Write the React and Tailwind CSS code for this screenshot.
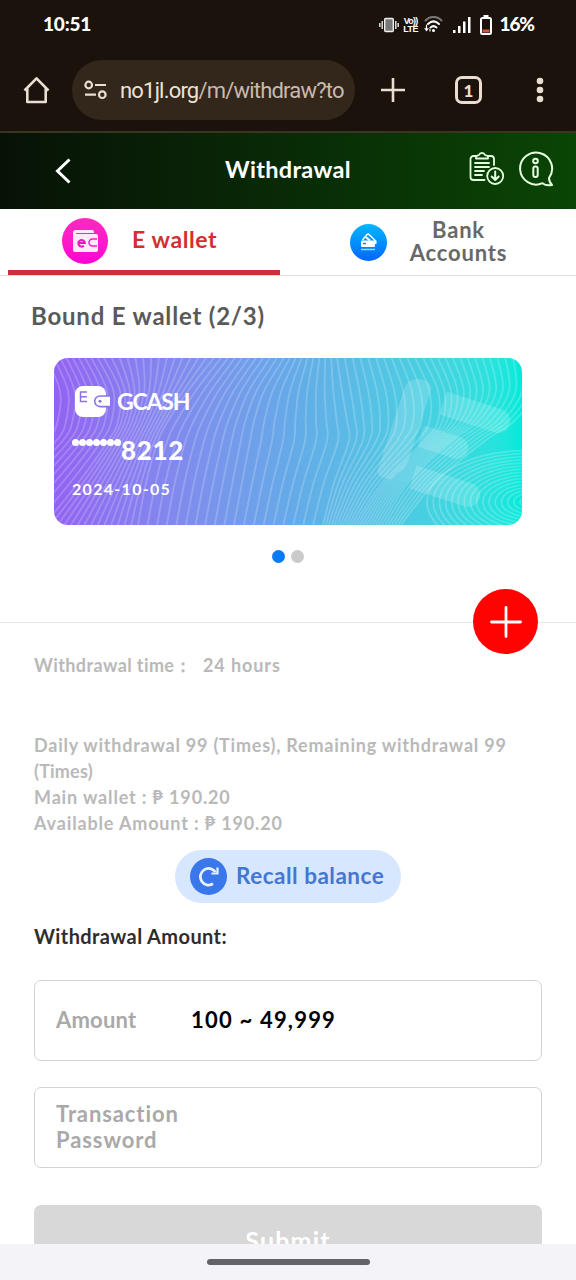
import { clsx } from 'clsx';

// x positions of the card's guide waves at each of WAVE_Y
const WAVE_Y = [0, 33, 63, 83, 125, 167];
const WAVES = [
  [-60, -50, -55, -70, -120, -180],
  [0, 14, 12, 2, -40, -85],
  [50, 66, 64, 54, 24, -10],
  [160, 134, 114, 104, 92, 84],
  [230, 210, 200, 196, 188, 180],
  [283, 288, 293, 295, 280, 269],
  [369, 384, 384, 370, 328, 300],
  [436, 442, 425, 398, 354, 328],
  [490, 488, 466, 436, 385, 350],
];
const WAVE_STEPS = [8, 8, 14, 10, 9, 11, 9, 7];

function wavePath(xs) {
  const p = xs.map((x, i) => [x, WAVE_Y[i]]);
  let d = `M${p[0][0]} ${p[0][1]}`;
  for (let i = 0; i < p.length - 1; i++) {
    const a = p[Math.max(i - 1, 0)];
    const b = p[i];
    const c = p[i + 1];
    const e = p[Math.min(i + 2, p.length - 1)];
    d += `C${b[0] + (c[0] - a[0]) / 6} ${b[1] + (c[1] - a[1]) / 6} ${c[0] - (e[0] - b[0]) / 6} ${c[1] - (e[1] - b[1]) / 6} ${c[0]} ${c[1]}`;
  }
  return d;
}

function CardPattern() {
  const paths = [];
  WAVE_STEPS.forEach((steps, k) => {
    for (let s = 0; s < steps; s++) {
      const t = s / steps;
      paths.push(wavePath(WAVES[k].map((x, i) => x + (WAVES[k + 1][i] - x) * t)));
    }
  });

  return (
    <svg className="absolute inset-0" width="468" height="167" viewBox="0 0 468 167" fill="none">
      <g stroke="#fff" strokeOpacity="0.2" strokeWidth="1.8">
        {paths.map((d) => (
          <path key={d} d={d} />
        ))}
        {Array.from({ length: 16 }, (_, i) => (
          <ellipse key={i} cx="474" cy="144" rx={8 + i * 6.2} ry={5 + i * 3.1} />
        ))}
      </g>
      {/* Large tilted E */}
      <g fill="#fff" fillOpacity="0.17">
        <path d="M-12 14a14 14 0 0 1 14-14h4a8 8 0 0 1 8 8v72a20 20 0 0 1-7 17l-3 8h-10a6 6 0 0 1-6-6z" transform="translate(366 21) rotate(18)" />
        <path d="M0-12h58a12 12 0 0 1 0 24H0z" transform="translate(389 45) rotate(18)" />
        <path d="M0-11h38a11 11 0 0 1 0 22H0z" transform="translate(367 78) rotate(18)" />
        <path d="M0-12h58a12 12 0 0 1 0 24H0z" transform="translate(359 119) rotate(18)" />
      </g>
    </svg>
  );
}

function StatusBar() {
  return (
    <div className="flex h-[49px] items-center pl-[43px] pr-[42px] text-white">
      <span className="font-['Lato'] text-[19px] font-black tracking-[-0.2px]">10:51</span>
      <div className="ml-auto flex items-center">
        <svg width="20" height="16" viewBox="0 0 20 16" fill="none" stroke="#eee" strokeWidth="1.4">
          <rect x="5.7" y="1.5" width="8.6" height="13" rx="1" fill="#777" />
          <path d="M3.2 4v8M16.8 4v8M.8 6v4M19.2 6v4" />
        </svg>
        <div className="ml-[4px] flex w-[16px] flex-col items-center font-['Liberation_Sans'] text-[9px] font-bold leading-[8px]">
          <span className="tracking-[-0.8px]">Vo))</span>
          <span className="tracking-[-0.6px]">LTE</span>
        </div>
        <svg className="ml-[5px]" width="19" height="17" viewBox="0 0 19 17" fill="none" strokeWidth="2" strokeLinecap="round">
          <path d="M1.5 4.5C6-.2 13-.2 17.5 4.5" stroke="#777" />
          <path d="M4 8c3.5-3.3 7.5-3.3 11 0M6.5 11.4c2-1.7 4-1.7 6 0" stroke="#fff" />
          <circle cx="9.5" cy="14.4" r="1.5" fill="#fff" />
          <path d="M2.5 9v5M1 12.5l1.5 2 1.5-2M6 15v-2" stroke="#fff" strokeWidth="1.2" />
        </svg>
        <svg className="ml-[10px]" width="18" height="16" viewBox="0 0 18 16" fill="#fff">
          <path d="M0 13h2.5v3H0zM5 9h2.5v7H5zM10 4.500h2.500V16H10zM15 0h2.500v16H15z" />
        </svg>
        <svg className="ml-[9px]" width="12" height="20" viewBox="0 0 12 20">
          <path d="M3.5 0h5v3h-5z" fill="#fff" />
          <rect x="1" y="3" width="10" height="16" rx="1.5" fill="none" stroke="#fff" strokeWidth="2" />
          <path d="M2.5 14.5h7v3h-7z" fill="#d5533f" />
        </svg>
        <span className="ml-[8px] font-['Lato'] text-[19px] font-black tracking-[-1.100px]">16%</span>
      </div>
    </div>
  );
}

function BrowserBar() {
  return (
    <div className="flex h-[84px] items-center border-b-2 border-[#3b3420] text-[#eaded3]">
      <svg className="ml-[23px]" width="27" height="28" viewBox="0 0 27 28" fill="none" stroke="currentColor" strokeWidth="2.6">
        <path d="M1.500 14.500L13.500 2.300 25.500 14.500M4.300 12.500V26h18.400V12.500" strokeLinejoin="round" />
      </svg>
      <div className="ml-[22px] flex h-[60px] w-[283px] items-center rounded-full bg-[#33261a] pl-3">
        <svg width="23" height="20" viewBox="0 0 23 20" fill="none" stroke="currentColor" strokeWidth="2.2">
          <circle cx="4.7" cy="5" r="3.3" />
          <circle cx="18.3" cy="14.7" r="3.3" />
          <path d="M11 5h11M1 14.7h11" />
        </svg>
        <div className="ml-[13px] whitespace-nowrap font-['Roboto'] text-[22px] tracking-[-0.8px] text-[#c9bbac]">
          <span className="text-[#eee2d6]">no1jl.org</span>/m/withdraw?to
        </div>
      </div>
      <svg className="ml-[26px]" width="24" height="24" viewBox="0 0 24 24" stroke="currentColor" strokeWidth="2.6">
        <path d="M12 0v24M0 12h24" />
      </svg>
      <div className="ml-[50px] flex h-[28px] w-[27px] items-center justify-center rounded-[7px] border-[3px] border-current font-['Lato'] text-[17px] font-black leading-none">
        1
      </div>
      <svg className="ml-[54px]" width="8" height="26" viewBox="0 0 8 26" fill="currentColor">
        <circle cx="4" cy="4" r="3.3" />
        <circle cx="4" cy="13" r="3.3" />
        <circle cx="4" cy="22" r="3.3" />
      </svg>
    </div>
  );
}

function PageHeader() {
  return (
    <header className="flex h-[76px] shrink-0 items-center bg-linear-to-r from-[#071206] via-[#082b06] to-[#0a4504] text-white">
      <svg className="ml-[55px]" width="17" height="26" viewBox="0 0 17 26" fill="none" stroke="currentColor" strokeWidth="3">
        <path d="M14.500 1.500L2.500 13l12 11.500" />
      </svg>
      <h1 className="ml-[153px] w-[127px] whitespace-nowrap pb-[3px] text-[23.5px] font-bold leading-none tracking-[0.3px]">Withdrawal</h1>
      <svg className="mb-[5px] ml-[117px]" width="36" height="35" viewBox="0 0 36 35" fill="none" stroke="#e6ffe0" strokeWidth="1.8" strokeLinecap="round" strokeLinejoin="round">
        <path d="M7 5H4.500A3 3 0 0 0 1.500 8v18a3 3 0 0 0 3 3h11M19 5h3a3 3 0 0 1 3 3v6" />
        <path d="M7 7.500V5.200l3-1.200a3.200 3.200 0 0 1 6 0l3 1.200v2.300zM6 12h14M6 16h14M6 20h9M6 24h7" />
        <circle cx="26.2" cy="25" r="8" />
        <path d="M26.200 20.500v8M22.700 25.500l3.500 3.500 3.500-3.500" strokeWidth="2" />
      </svg>
      <svg className="mb-[5px] ml-[13px]" width="36" height="36" viewBox="0 0 36 36" fill="none" stroke="#e6ffe0" strokeWidth="2" strokeLinejoin="round">
        <path d="M34 34c-4 .8-7 .2-9.500-1.800a16 16 0 1 1 6.500-5.200c0 3 1 5 3 7z" />
        <circle cx="17.5" cy="10" r="2.3" />
        <rect x="15.3" y="15.5" width="4.4" height="10.5" rx="2" />
      </svg>
    </header>
  );
}

function Tabs() {
  return (
    <div className="flex h-[67px] shrink-0 border-b border-[#dedede]">
      <div className="ml-2 flex w-[272px] items-center border-b-[5px] border-[#d03034]">
        <div className="ml-[54px] mt-[3px] flex size-[46px] items-center justify-center rounded-full bg-linear-to-b from-[#ff28be] to-[#ff00d4]">
          <svg width="25" height="23" viewBox="0 0 25 23">
            <path d="M2.500 0H19a2 2 0 0 1 2 2v1H3v1h20a2 2 0 0 1 2 2v14a2 2 0 0 1-2 2H2.500A2.500 2.500 0 0 1 0 19.500v-17A2.500 2.500 0 0 1 2.500 0z" fill="#ffe9fa" />
            <path d="M24 9h-4.500a3.500 3.500 0 0 0 0 7H24" fill="none" stroke="#f51bc4" strokeWidth="1.5" />
            <path d="M5.500 13h6.300a3.200 3.200 0 1 0-1 2.700" fill="none" stroke="#e51abd" strokeWidth="2.2" />
          </svg>
        </div>
        <span className="ml-6 whitespace-nowrap text-[23px] font-bold tracking-[0.6px] text-[#d03034]">E wallet</span>
      </div>
      <div className="ml-[70px] flex items-center">
        <div className="flex size-[37px] items-center justify-center rounded-full bg-linear-to-b from-[#0bb6ff] to-[#0865fa]">
          <svg width="18" height="18" viewBox="0 0 18 18" fill="none">
            <path d="M2.500 7L7 1.500a1.500 1.500 0 0 1 2 0L15.800 8v3" stroke="#fff" strokeWidth="1.5" />
            <path d="M5 3.500L10 7.500" stroke="#fff" strokeWidth="1.8" />
            <rect x="1" y="7.5" width="14" height="6.500" rx="1" fill="#fff" />
            <path d="M3 10.500h3" stroke="#1683fd" strokeWidth="1.5" />
            <path d="M1 16.500h14" stroke="#9bd4ff" strokeWidth="1.5" />
          </svg>
        </div>
        <span className="-mt-[3px] ml-[21px] w-[101px] text-center text-[22px] font-bold leading-[23px] tracking-[0.8px] text-[#686868]">
          Bank Accounts
        </span>
      </div>
    </div>
  );
}

function WalletCard() {
  return (
    <div className="relative ml-[54px] mt-[26px] h-[167px] w-[468px] overflow-hidden rounded-[14px] bg-linear-to-r from-[#9262f2] via-[#65a9e8] to-[#00eadb]">
      <CardPattern />
      <div className="relative flex flex-col pl-[18px] pt-[28px] text-white">
        <div className="flex h-[31px] items-center">
          <svg className="ml-[3px]" width="35" height="31" viewBox="0 0 35 31">
            <rect width="31" height="31" rx="8" fill="#fff" />
            <path d="M12 6H5.500v9.500H12M5.500 10.700H12" fill="none" stroke="#8d72ee" strokeWidth="1.5" />
            <path d="M35 10H25a5.300 5.300 0 0 0 0 10.600h10" fill="#fff" stroke="#8874ec" strokeWidth="1.6" />
            <circle cx="25" cy="15.3" r="1.5" fill="#8874ec" />
          </svg>
          <span className="ml-[7px] text-[23px] font-bold tracking-[-1.200px]">GCASH</span>
        </div>
        <div className="mt-[15px] flex h-[36px] items-start">
          <span className="flex pt-[7px]">
            {Array.from({ length: 7 }, (_, i) => (
              <i key={i} className="h-[7px] w-[7px] rounded-full bg-white" />
            ))}
          </span>
          <span className="text-[26px] font-black leading-[36px] tracking-[0.7px]">8212</span>
        </div>
        <span className="mt-[9px] text-[16px] font-bold leading-6 tracking-[1.300px]">2024-10-05</span>
      </div>
    </div>
  );
}

function Field({ label, value, className }) {
  return (
    <div className={clsx('flex h-[81px] items-center rounded-[7px] border border-[#d3d3d3] pb-[2px] pl-[21px] text-[22px] font-bold', className)}>
      <span className={clsx('w-[135px] leading-[26px] text-[#a9a9a9]', value ? 'tracking-[0.2px]' : 'tracking-[0.9px]')}>{label}</span>
      <span className="tracking-[1.200px] text-black">{value}</span>
    </div>
  );
}

export default function App() {
  return (
    <div className="flex h-[1280px] w-[576px] flex-col overflow-hidden bg-white font-['Lato',sans-serif]">
      <div className="shrink-0 bg-[#1b120b]">
        <StatusBar />
        <BrowserBar />
      </div>
      <PageHeader />
      <Tabs />

      <main className="min-h-0 flex-1 overflow-hidden">
        <h2 className="pl-[31px] pt-[24px] text-[24px] font-bold leading-8 tracking-[0.8px] text-[#5a5a5a]">Bound E wallet (2/3)</h2>
        <WalletCard />
        <div className="mt-[25px] flex h-[13px] justify-center gap-[6px]">
          <i className="size-[13px] rounded-full bg-[#087bf4]" />
          <i className="size-[13px] rounded-full bg-[#cacaca]" />
        </div>

        <div className="relative mt-[59px] border-t border-[#e8e8e8]">
          <button className="absolute -top-[34px] left-[473px] flex size-[65px] items-center justify-center rounded-full bg-[#ff0202]">
            <svg width="32" height="32" viewBox="0 0 32 32" stroke="#fff" strokeWidth="2.8" strokeLinecap="round">
              <path d="M16 1.500v29M1.500 16h29" />
            </svg>
          </button>
        </div>

        <div className="px-[34px] text-[18px] font-bold leading-[26px] text-[#b9b9b9]">
          <p className="mt-[29px] flex whitespace-nowrap">
            <span className="w-[169px] tracking-[0.4px]">Withdrawal time：</span>
            <span className="tracking-[0.9px]">24 hours</span>
          </p>
          <p className="mt-[54px] whitespace-nowrap tracking-[0.77px]">
            Daily withdrawal 99 (Times), Remaining withdrawal 99
            <br />
            <span className="tracking-[0.2px]">(Times)</span>
          </p>
          <p className="tracking-[0.85px]">Main wallet : ₱ 190.20</p>
          <p className="tracking-[0.85px]">Available Amount : ₱ 190.20</p>

          <button className="ml-[141px] mt-[14px] flex h-[53px] w-[226px] items-center rounded-full bg-[#d7e7ff] pl-[15px] text-[#4477d2]">
            <span className="flex size-[37px] items-center justify-center rounded-full bg-[#3977eb]">
              <svg width="21" height="21" viewBox="0 0 21 21" fill="none" stroke="#e6f0ff" strokeWidth="2.8">
                <path d="M15 17.800A8.300 8.300 0 1 1 17.500 6" />
                <path d="M19.500 1.500v6h-6" strokeWidth="2.2" />
              </svg>
            </span>
            <span className="ml-[9px] whitespace-nowrap pb-[2px] text-[22.5px] tracking-[0.5px]">Recall balance</span>
          </button>

          <p className="mt-[20px] text-[20px] tracking-[0.4px] text-[#2d2d2d]">Withdrawal Amount:</p>

          <Field className="mt-[31px]" label="Amount" value="100 ~ 49,999" />
          <Field className="mt-[26px]" label="Transaction Password" />
          <button className="mt-[37px] h-[70px] w-full rounded-[7px] bg-[#d8d8d8] text-[25px] font-bold tracking-[1.200px] text-white">Submit</button>
        </div>
      </main>

      {/* Gesture navigation bar */}
      <div className="flex h-9 shrink-0 items-center justify-center bg-[#f3f3f8]">
        <div className="h-[6px] w-[163px] rounded-full bg-[#646468]" />
      </div>
    </div>
  );
}
